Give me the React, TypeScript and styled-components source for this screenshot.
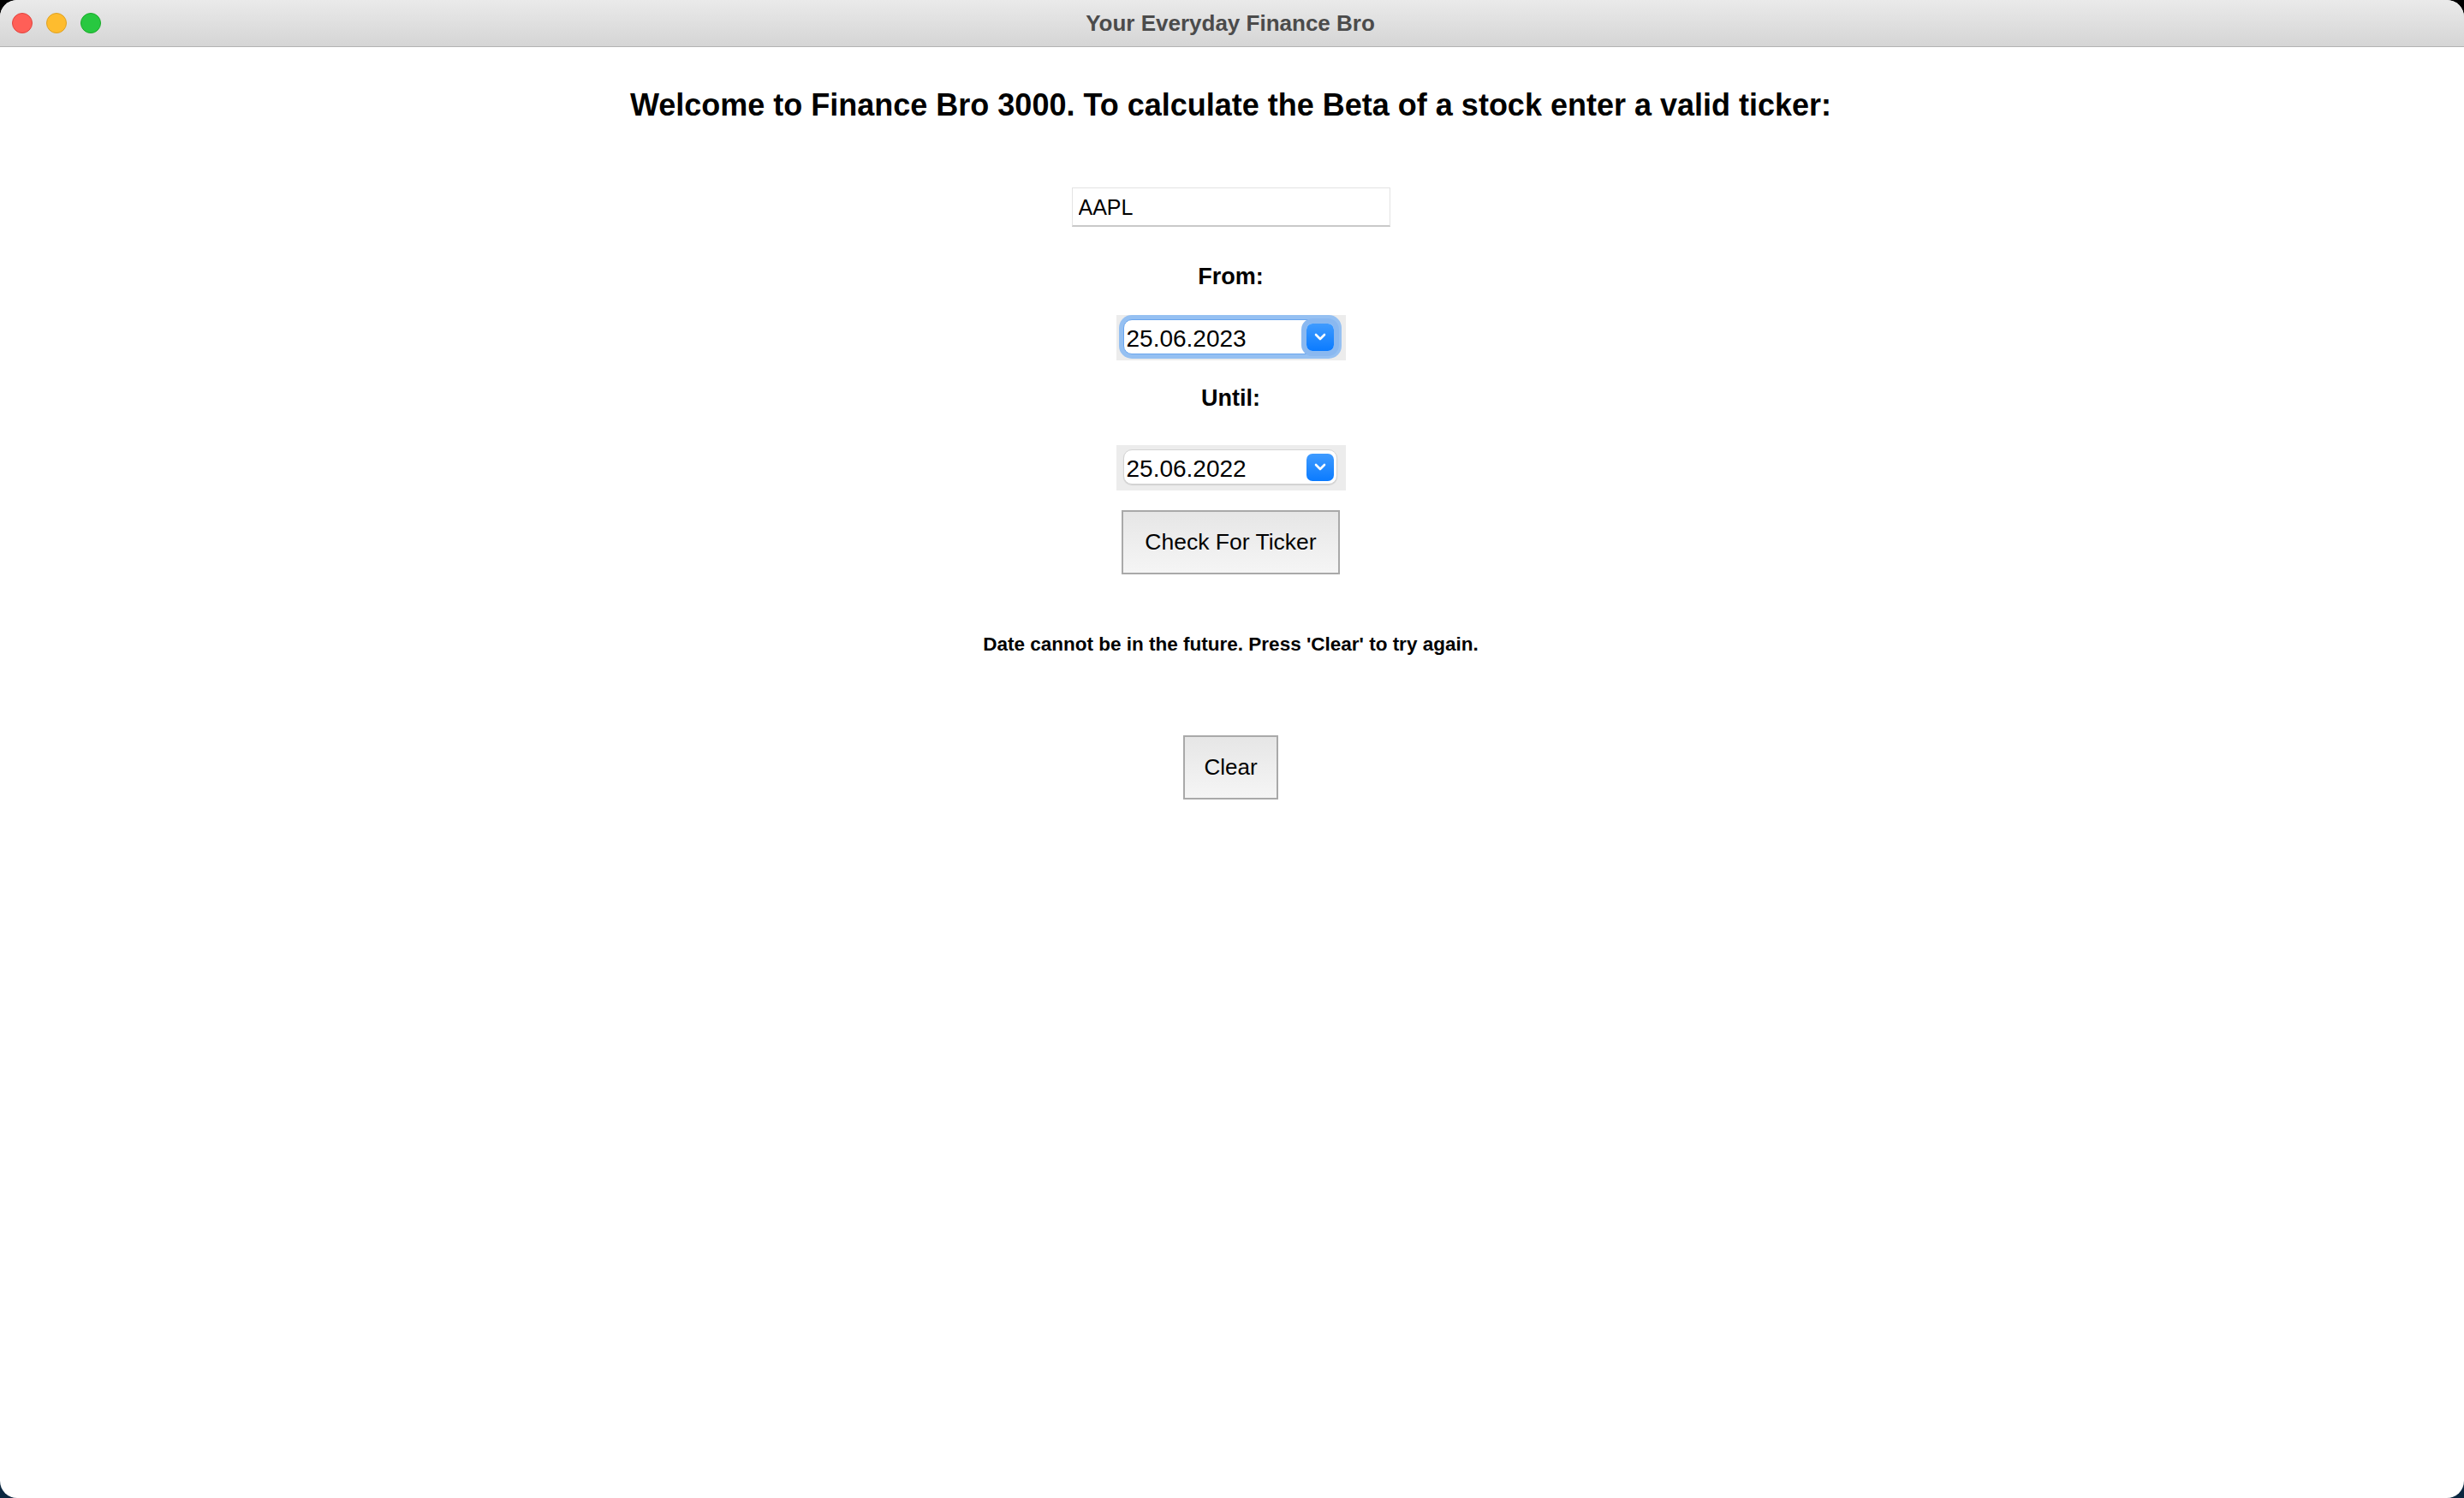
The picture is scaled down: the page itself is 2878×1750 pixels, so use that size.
import React from "react";
import styled, { createGlobalStyle, css } from "styled-components";

const GlobalStyle = createGlobalStyle`
    html, body {
        margin: 0;
        padding: 0;
        height: 100%;
        overflow: hidden;
        background: linear-gradient(#000000, #0b2740);
    }
    #root {
        height: 100%;
    }
`;

const Window = styled.div`
    height: 100vh;
    display: flex;
    flex-direction: column;
    background-color: #ffffff;
    border-radius: 20px;
    overflow: hidden;
    font-family: "Liberation Sans", Arial, sans-serif;
    color: #000;
`;

const TitleBar = styled.div`
    height: 54px;
    flex-shrink: 0;
    display: grid;
    grid-template-columns: 1fr auto 1fr;
    align-items: center;
    background: linear-gradient(#eaeaea, #d5d5d5);
    border-bottom: 1px solid #b3b3b3;
`;

const Lights = styled.div`
    display: flex;
    gap: 16px;
    padding-left: 14px;
`;

const Light = styled.span<{ $fill: string; $edge: string }>`
    width: 22px;
    height: 22px;
    border-radius: 50%;
    background-color: ${(p) => p.$fill};
    border: 1px solid ${(p) => p.$edge};
`;

const WindowTitle = styled.div`
    font-size: 26px;
    font-weight: bold;
    color: #4b4b4b;
    padding-right: 4px;
`;

const Content = styled.div`
    display: flex;
    flex-direction: column;
    align-items: center;
    padding-right: 3px;
`;

const Heading = styled.h1`
    margin: 46px 0 0;
    font-size: 36px;
    line-height: 44px;
    font-weight: bold;
`;

const TickerInput = styled.input`
    margin-top: 74px;
    box-sizing: border-box;
    width: 372px;
    height: 46px;
    padding: 2px 7px 0;
    border: 1px solid #e3e3e3;
    border-bottom: 2px solid #c9c9c9;
    font-family: "Liberation Sans", Arial, sans-serif;
    font-size: 25px;
    color: #000;
    outline: none;
`;

const Label = styled.div<{ $gap: number }>`
    margin-top: ${(p) => p.$gap}px;
    font-size: 27px;
    line-height: 32px;
    font-weight: bold;
`;

const PickerFrame = styled.div<{ $gap: number }>`
    margin-top: ${(p) => p.$gap}px;
    box-sizing: border-box;
    width: 268px;
    height: 53px;
    padding: 5px 10px 7px 8px;
    background-color: #ececec;
`;

const focusRing = css`
    border-color: #6aa6ee;
    box-shadow: 0 0 0 5px #95c0f2;
`;

const PickerField = styled.div<{ $focused?: boolean }>`
    box-sizing: border-box;
    height: 41px;
    display: flex;
    align-items: center;
    justify-content: space-between;
    padding: 0 3px 0 3px;
    background-color: #ffffff;
    border: 1px solid #d4d4d4;
    border-radius: 10px;
    box-shadow: 0 1px 1px rgba(0, 0, 0, 0.12);
    ${(p) => p.$focused && focusRing}
`;

const PickerText = styled.span`
    font-size: 28px;
    padding-top: 5px;
`;

const PickerButton = styled.span<{ $focused?: boolean }>`
    width: 32px;
    height: 32px;
    border-radius: 7px;
    display: flex;
    align-items: center;
    justify-content: center;
    background: linear-gradient(#3f9bff, #0b7bff);
    ${(p) => p.$focused && "box-shadow: 0 0 0 6px #8ab8f0;"}
`;

const PushButton = styled.button<{ $width: number; $gap: number; $size: number }>`
    margin-top: ${(p) => p.$gap}px;
    box-sizing: border-box;
    width: ${(p) => p.$width}px;
    height: 75px;
    border: 2px solid #a9a9a9;
    border-radius: 0;
    background: linear-gradient(#e6e6e6, #f5f5f5);
    font-family: "Liberation Sans", Arial, sans-serif;
    font-size: ${(p) => p.$size}px;
    color: #000;
    padding: 0;
`;

const Message = styled.div`
    margin-top: 69px;
    font-size: 22.5px;
    line-height: 26px;
    font-weight: bold;
`;

const Chevron = () => (
    <svg width="14" height="9" viewBox="0 0 14 9">
        <polyline points="2,2 7,7 12,2" fill="none" stroke="#ffffff" strokeWidth="2.6" strokeLinecap="round" strokeLinejoin="round" />
    </svg>
);

const DatePicker = ({ value, gap, focused }: { value: string; gap: number; focused?: boolean }) => (
    <PickerFrame $gap={gap}>
        <PickerField $focused={focused}>
            <PickerText>{value}</PickerText>
            <PickerButton $focused={focused}>
                <Chevron />
            </PickerButton>
        </PickerField>
    </PickerFrame>
);

const App = () => {
    return (
        <>
            <GlobalStyle />
            <Window>
                <TitleBar>
                    <Lights>
                        <Light $fill="#ff5f57" $edge="#e0443e" />
                        <Light $fill="#febc2e" $edge="#dea123" />
                        <Light $fill="#28c840" $edge="#1aab29" />
                    </Lights>
                    <WindowTitle>Your Everyday Finance Bro</WindowTitle>
                    <div />
                </TitleBar>
                <Content>
                    <Heading>Welcome to Finance Bro 3000. To calculate the Beta of a stock enter a valid ticker:</Heading>
                    <TickerInput defaultValue="AAPL" />
                    <Label $gap={42}>From:</Label>
                    <DatePicker value="25.06.2023" gap={29} focused />
                    <Label $gap={28}>Until:</Label>
                    <DatePicker value="25.06.2022" gap={39} />
                    <PushButton $width={255} $gap={23} $size={26.5}>Check For Ticker</PushButton>
                    <Message>Date cannot be in the future. Press 'Clear' to try again.</Message>
                    <PushButton $width={111} $gap={93} $size={26}>Clear</PushButton>
                </Content>
            </Window>
        </>
    );
};

export default App;
